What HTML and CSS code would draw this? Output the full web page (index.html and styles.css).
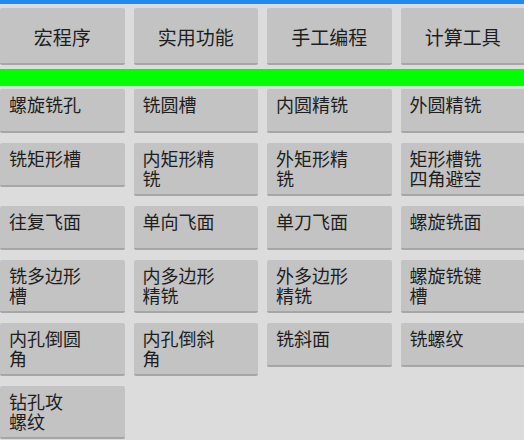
FILE: index.html
```html
<!DOCTYPE html>
<html lang="zh-CN">
<head>
<meta charset="utf-8">
<title>宏程序</title>
<link rel="stylesheet" href="styles.css">
</head>
<body>
<div class="app">
  <div class="statusbar"></div>
  <div class="tabs">
    <div class="tab">宏程序</div>
    <div class="tab">实用功能</div>
    <div class="tab">手工编程</div>
    <div class="tab">计算工具</div>
  </div>
  <div class="indicator"></div>
  <div class="grid">
    <div class="btn">螺旋铣孔</div>
    <div class="btn">铣圆槽</div>
    <div class="btn">内圆精铣</div>
    <div class="btn">外圆精铣</div>
    <div class="btn">铣矩形槽</div>
    <div class="btn">内矩形精<br>铣</div>
    <div class="btn">外矩形精<br>铣</div>
    <div class="btn">矩形槽铣<br>四角避空</div>
    <div class="btn">往复飞面</div>
    <div class="btn">单向飞面</div>
    <div class="btn">单刀飞面</div>
    <div class="btn">螺旋铣面</div>
    <div class="btn">铣多边形<br>槽</div>
    <div class="btn">内多边形<br>精铣</div>
    <div class="btn">外多边形<br>精铣</div>
    <div class="btn">螺旋铣键<br>槽</div>
    <div class="btn">内孔倒圆<br>角</div>
    <div class="btn">内孔倒斜<br>角</div>
    <div class="btn">铣斜面</div>
    <div class="btn">铣螺纹</div>
    <div class="btn">钻孔攻<br>螺纹</div>
  </div>
</div>
</body>
</html>
```
FILE: styles.css
```css
html, body {
  margin: 0;
  padding: 0;
  background: #dcdcdc;
  overflow: hidden;
}

.app {
  width: 524px;
  height: 440px;
  overflow: hidden;
  font-family: "Noto Sans CJK SC", "Noto Sans", sans-serif;
  color: #1e1e1e;
}

.statusbar {
  height: 4px;
  background: #1e8cf5;
}

.tabs {
  display: grid;
  grid-template-columns: repeat(4, 124.5px);
  column-gap: 9px;
  margin-top: 4px;
}

.tab {
  height: 57px;
  box-sizing: border-box;
  background: #c3c3c3;
  border-bottom: 2px solid #a6a6a6;
  border-radius: 2px;
  display: flex;
  align-items: center;
  justify-content: center;
  font-size: 19px;
  padding-top: 2px;
}

.indicator {
  height: 17px;
  margin-top: 4px;
  background: #00ff00;
}

.grid {
  display: grid;
  grid-template-columns: repeat(4, 124.5px);
  column-gap: 9px;
  row-gap: 10px;
  margin-top: 3px;
  align-items: start;
}

.btn {
  box-sizing: border-box;
  min-height: 44px;
  background: #c3c3c3;
  border-bottom: 2px solid #a6a6a6;
  border-radius: 2px;
  padding: 5px 8px 6px 9px;
  font-size: 18px;
  line-height: 20px;
}
```
